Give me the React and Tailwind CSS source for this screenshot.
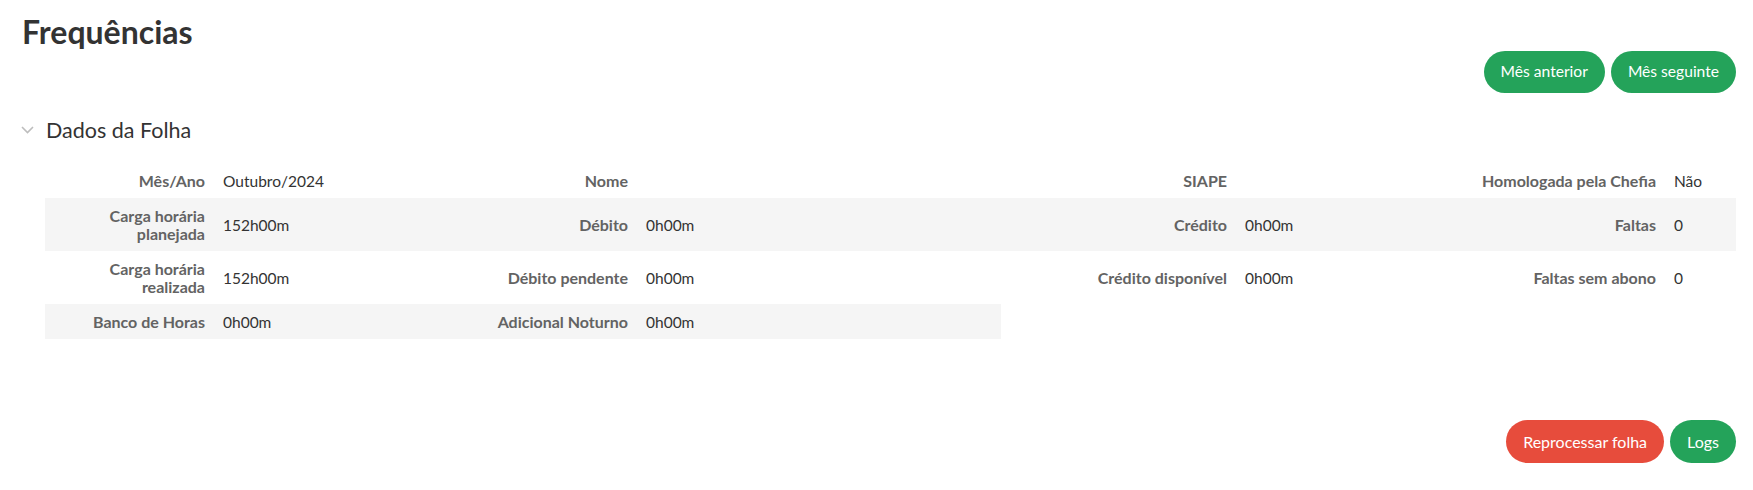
import React from 'react';

const rows = [
  [
    ['Mês/Ano', 'Outubro/2024'],
    ['Nome', ''],
    ['SIAPE', ''],
    ['Homologada pela Chefia', 'Não'],
  ],
  [
    ['Carga horária planejada', '152h00m'],
    ['Débito', '0h00m'],
    ['Crédito', '0h00m'],
    ['Faltas', '0'],
  ],
  [
    ['Carga horária realizada', '152h00m'],
    ['Débito pendente', '0h00m'],
    ['Crédito disponível', '0h00m'],
    ['Faltas sem abono', '0'],
  ],
  [
    ['Banco de Horas', '0h00m'],
    ['Adicional Noturno', '0h00m'],
  ],
];

const Button = ({ children, color = 'green', tall = false }) => (
  <button
    className={`${tall ? 'h-[43px] text-[16px]' : 'h-[42px] text-[15.6px]'} rounded-full px-[17px] text-white ${
      color === 'red' ? 'bg-[#e74c3c]' : 'bg-[#24a35a]'
    }`}
  >
    {children}
  </button>
);

const App = () => {
  return (
    <div className="min-h-screen bg-white pl-[22px] pr-[17px] font-[Lato,sans-serif] text-[#333]">
      <h1 className="pt-[13px] text-[32px] font-bold leading-[38px] text-[#333]">Frequências</h1>

      <div className="flex justify-end gap-[6px]">
        <Button>Mês anterior</Button>
        <Button>Mês seguinte</Button>
      </div>

      <div className="mt-[25px] flex items-center -ml-[1px]">
        <svg width="13" height="8" viewBox="0 0 13 8" className="mr-[12px]">
          <polyline points="1,1 6.5,6.5 12,1" fill="none" stroke="#bdbdbd" strokeWidth="1.6" />
        </svg>
        <span className="text-[21.5px] leading-[24px] text-[#333]">Dados da Folha</span>
      </div>

      <table className="ml-[23px] mt-[21px] w-[calc(100%-23px)] table-fixed border-collapse">
        <colgroup>
          <col className="w-[169px]" />
          <col className="w-[250px]" />
          <col className="w-[173px]" />
          <col className="w-[364px]" />
          <col className="w-[235px]" />
          <col className="w-[200px]" />
          <col className="w-[229px]" />
          <col className="w-[71px]" />
        </colgroup>
        <tbody>
          {rows.map((row, i) => (
            <tr key={i} className={i % 2 === 1 ? 'bg-[#f5f5f5]' : ''}>
              {row.map(([label, value]) => (
                <React.Fragment key={label}>
                  <th className="pt-[9px] pb-[8px] pl-[30px] pr-[9px] text-right align-middle text-[16px] font-bold leading-[18px] text-[#636363]">
                    {label}
                  </th>
                  <td className="pt-[9px] pb-[8px] pl-[9px] align-middle text-[15.5px] leading-[18px] text-[#333]">
                    {value}
                  </td>
                </React.Fragment>
              ))}
            </tr>
          ))}
        </tbody>
      </table>

      <div className="mt-[81px] flex justify-end gap-[6px]">
        <Button color="red" tall>Reprocessar folha</Button>
        <Button tall>Logs</Button>
      </div>
    </div>
  );
};

export default App;
